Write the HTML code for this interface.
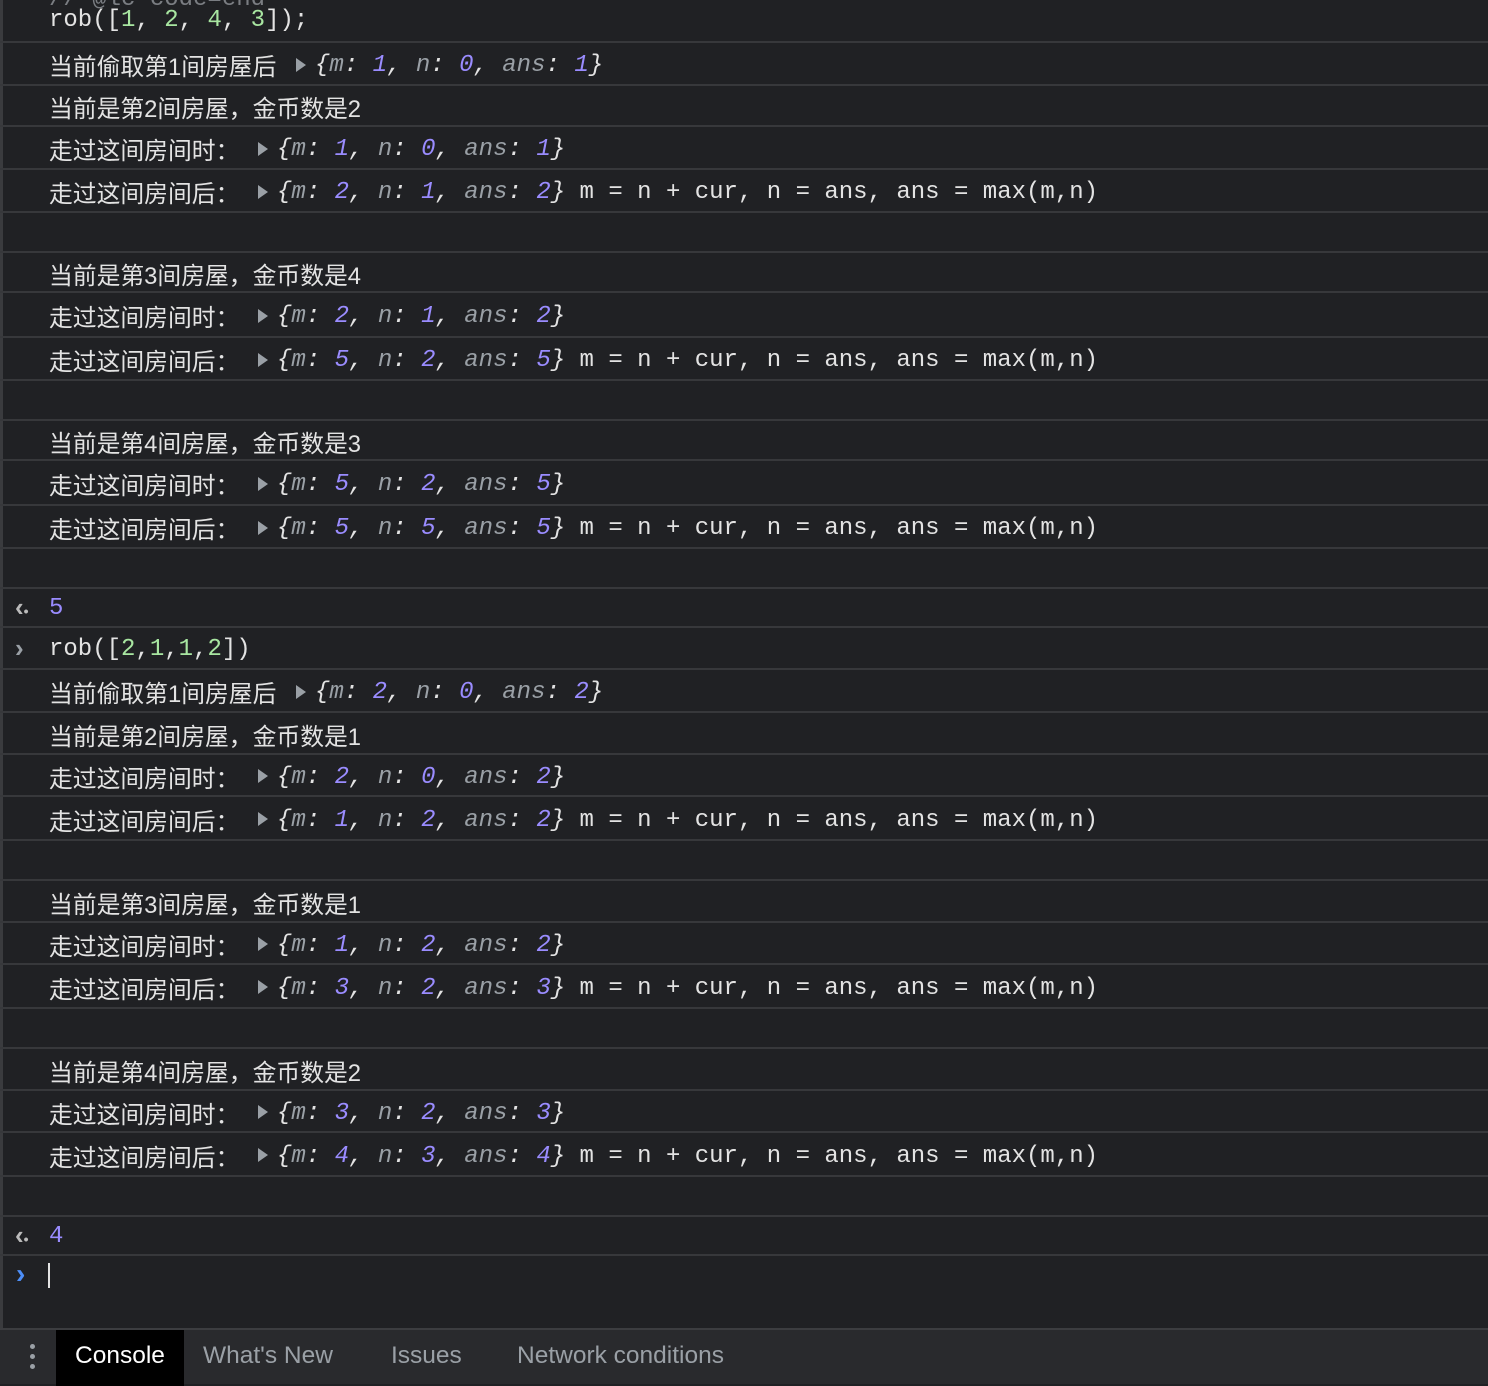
<!DOCTYPE html>
<html><head><meta charset="utf-8"><style>
body{margin:0;width:1488px;height:1384px;background:#202124;overflow:hidden;position:relative;font-family:"Liberation Sans","Noto Sans CJK SC",sans-serif;color:#e3e3e3}
.r{position:absolute;left:0;width:1488px;border-bottom:2px solid #37383b;box-sizing:border-box;display:flex;align-items:center}
.t{position:absolute;left:49px;font-size:23.8px;white-space:nowrap;margin-top:2px}
.m{font-family:"Liberation Mono","DejaVu Sans Mono",monospace;font-size:24px;white-space:pre}
.o{position:absolute;font-family:"Liberation Mono","DejaVu Sans Mono",monospace;font-size:24px;white-space:pre;font-style:italic;color:#e3e3e3;margin-top:4px}
.k{color:#9aa0a6}.n{color:#9a8cff}.g{color:#a8e6a1}
.tri{position:absolute;width:0;height:0;border-top:7px solid transparent;border-bottom:7px solid transparent;border-left:10px solid #9aa0a6}
.ic{position:absolute;left:15px;color:#bbb;font-size:26px;font-weight:bold}
.s{font-style:normal;color:#e3e3e3}
</style></head><body>
<div style="position:absolute;left:0;top:0;width:3px;height:1330px;background:#3a3b3e"></div>
<div class="m" style="position:absolute;left:49px;top:-14px;color:#7a7d82">// @lc code=end</div>

<div class="r" style="top:0;height:43px"><span class="t m" style="margin-top:0">rob([<span class="g">1</span>, <span class="g">2</span>, <span class="g">4</span>, <span class="g">3</span>]);</span></div>

<div class="r" style="top:43px;height:43px"><span class="t">当前偷取第1间房屋后</span><span class="tri" style="left:296px;margin-top:2px"></span><span class="o" style="left:315px">{<span class="k">m</span>: <span class="n">1</span>, <span class="k">n</span>: <span class="n">0</span>, <span class="k">ans</span>: <span class="n">1</span>}</span></div>
<div class="r" style="top:86px;height:41px"><span class="t">当前是第2间房屋，金币数是2</span></div>
<div class="r" style="top:127px;height:43px"><span class="t">走过这间房间时：</span><span class="tri" style="left:258px;margin-top:2px"></span><span class="o" style="left:277px">{<span class="k">m</span>: <span class="n">1</span>, <span class="k">n</span>: <span class="n">0</span>, <span class="k">ans</span>: <span class="n">1</span>}</span></div>
<div class="r" style="top:170px;height:43px"><span class="t">走过这间房间后：</span><span class="tri" style="left:258px;margin-top:2px"></span><span class="o" style="left:277px">{<span class="k">m</span>: <span class="n">2</span>, <span class="k">n</span>: <span class="n">1</span>, <span class="k">ans</span>: <span class="n">2</span>}<span class="s"> m = n + cur, n = ans, ans = max(m,n)</span></span></div>
<div class="r" style="top:213px;height:40px"></div>

<div class="r" style="top:253px;height:40px"><span class="t">当前是第3间房屋，金币数是4</span></div>
<div class="r" style="top:293px;height:45px"><span class="t">走过这间房间时：</span><span class="tri" style="left:258px;margin-top:2px"></span><span class="o" style="left:277px">{<span class="k">m</span>: <span class="n">2</span>, <span class="k">n</span>: <span class="n">1</span>, <span class="k">ans</span>: <span class="n">2</span>}</span></div>
<div class="r" style="top:338px;height:43px"><span class="t">走过这间房间后：</span><span class="tri" style="left:258px;margin-top:2px"></span><span class="o" style="left:277px">{<span class="k">m</span>: <span class="n">5</span>, <span class="k">n</span>: <span class="n">2</span>, <span class="k">ans</span>: <span class="n">5</span>}<span class="s"> m = n + cur, n = ans, ans = max(m,n)</span></span></div>
<div class="r" style="top:381px;height:40px"></div>

<div class="r" style="top:421px;height:40px"><span class="t">当前是第4间房屋，金币数是3</span></div>
<div class="r" style="top:461px;height:45px"><span class="t">走过这间房间时：</span><span class="tri" style="left:258px;margin-top:2px"></span><span class="o" style="left:277px">{<span class="k">m</span>: <span class="n">5</span>, <span class="k">n</span>: <span class="n">2</span>, <span class="k">ans</span>: <span class="n">5</span>}</span></div>
<div class="r" style="top:506px;height:43px"><span class="t">走过这间房间后：</span><span class="tri" style="left:258px;margin-top:2px"></span><span class="o" style="left:277px">{<span class="k">m</span>: <span class="n">5</span>, <span class="k">n</span>: <span class="n">5</span>, <span class="k">ans</span>: <span class="n">5</span>}<span class="s"> m = n + cur, n = ans, ans = max(m,n)</span></span></div>
<div class="r" style="top:549px;height:40px"></div>

<div class="r" style="top:589px;height:39px"><span class="ic">‹<span style="font-size:14px">•</span></span><span class="t m n">5</span></div>
<div class="r" style="top:628px;height:42px"><span class="ic" style="color:#9aa0a6">›</span><span class="t m">rob([<span class="g">2</span>,<span class="g">1</span>,<span class="g">1</span>,<span class="g">2</span>])</span></div>

<div class="r" style="top:670px;height:43px"><span class="t">当前偷取第1间房屋后</span><span class="tri" style="left:296px;margin-top:2px"></span><span class="o" style="left:315px">{<span class="k">m</span>: <span class="n">2</span>, <span class="k">n</span>: <span class="n">0</span>, <span class="k">ans</span>: <span class="n">2</span>}</span></div>
<div class="r" style="top:713px;height:42px"><span class="t">当前是第2间房屋，金币数是1</span></div>
<div class="r" style="top:755px;height:42px"><span class="t">走过这间房间时：</span><span class="tri" style="left:258px;margin-top:2px"></span><span class="o" style="left:277px">{<span class="k">m</span>: <span class="n">2</span>, <span class="k">n</span>: <span class="n">0</span>, <span class="k">ans</span>: <span class="n">2</span>}</span></div>
<div class="r" style="top:797px;height:44px"><span class="t">走过这间房间后：</span><span class="tri" style="left:258px;margin-top:2px"></span><span class="o" style="left:277px">{<span class="k">m</span>: <span class="n">1</span>, <span class="k">n</span>: <span class="n">2</span>, <span class="k">ans</span>: <span class="n">2</span>}<span class="s"> m = n + cur, n = ans, ans = max(m,n)</span></span></div>
<div class="r" style="top:841px;height:40px"></div>

<div class="r" style="top:881px;height:42px"><span class="t">当前是第3间房屋，金币数是1</span></div>
<div class="r" style="top:923px;height:42px"><span class="t">走过这间房间时：</span><span class="tri" style="left:258px;margin-top:2px"></span><span class="o" style="left:277px">{<span class="k">m</span>: <span class="n">1</span>, <span class="k">n</span>: <span class="n">2</span>, <span class="k">ans</span>: <span class="n">2</span>}</span></div>
<div class="r" style="top:965px;height:44px"><span class="t">走过这间房间后：</span><span class="tri" style="left:258px;margin-top:2px"></span><span class="o" style="left:277px">{<span class="k">m</span>: <span class="n">3</span>, <span class="k">n</span>: <span class="n">2</span>, <span class="k">ans</span>: <span class="n">3</span>}<span class="s"> m = n + cur, n = ans, ans = max(m,n)</span></span></div>
<div class="r" style="top:1009px;height:40px"></div>

<div class="r" style="top:1049px;height:42px"><span class="t">当前是第4间房屋，金币数是2</span></div>
<div class="r" style="top:1091px;height:42px"><span class="t">走过这间房间时：</span><span class="tri" style="left:258px;margin-top:2px"></span><span class="o" style="left:277px">{<span class="k">m</span>: <span class="n">3</span>, <span class="k">n</span>: <span class="n">2</span>, <span class="k">ans</span>: <span class="n">3</span>}</span></div>
<div class="r" style="top:1133px;height:44px"><span class="t">走过这间房间后：</span><span class="tri" style="left:258px;margin-top:2px"></span><span class="o" style="left:277px">{<span class="k">m</span>: <span class="n">4</span>, <span class="k">n</span>: <span class="n">3</span>, <span class="k">ans</span>: <span class="n">4</span>}<span class="s"> m = n + cur, n = ans, ans = max(m,n)</span></span></div>
<div class="r" style="top:1177px;height:40px"></div>

<div class="r" style="top:1217px;height:39px"><span class="ic">‹<span style="font-size:14px">•</span></span><span class="t m n">4</span></div>
<div style="position:absolute;left:16px;top:1258px;color:#4d8ef7;font-size:28px;font-weight:bold">›</div>
<div style="position:absolute;left:48px;top:1263px;width:2px;height:25px;background:#e3e3e3"></div>

<div style="position:absolute;left:0;top:1328px;width:1488px;height:56px;background:#292a2d;border-top:2px solid #3c3d40;box-sizing:border-box">
  <div style="position:absolute;left:30px;top:14px;width:5px;height:5px;border-radius:50%;background:#9aa0a6"></div>
  <div style="position:absolute;left:30px;top:24px;width:5px;height:5px;border-radius:50%;background:#9aa0a6"></div>
  <div style="position:absolute;left:30px;top:34px;width:5px;height:5px;border-radius:50%;background:#9aa0a6"></div>
  <div style="position:absolute;left:56px;top:0;width:128px;height:56px;background:#000"></div>
  <span style="position:absolute;left:75px;top:12px;font-size:24.5px;color:#fff">Console</span>
  <span style="position:absolute;left:203px;top:12px;font-size:24.5px;color:#9aa0a6">What's New</span>
  <span style="position:absolute;left:391px;top:12px;font-size:24.5px;color:#9aa0a6">Issues</span>
  <span style="position:absolute;left:517px;top:12px;font-size:24.5px;color:#9aa0a6">Network conditions</span>
</div>
</body></html>
